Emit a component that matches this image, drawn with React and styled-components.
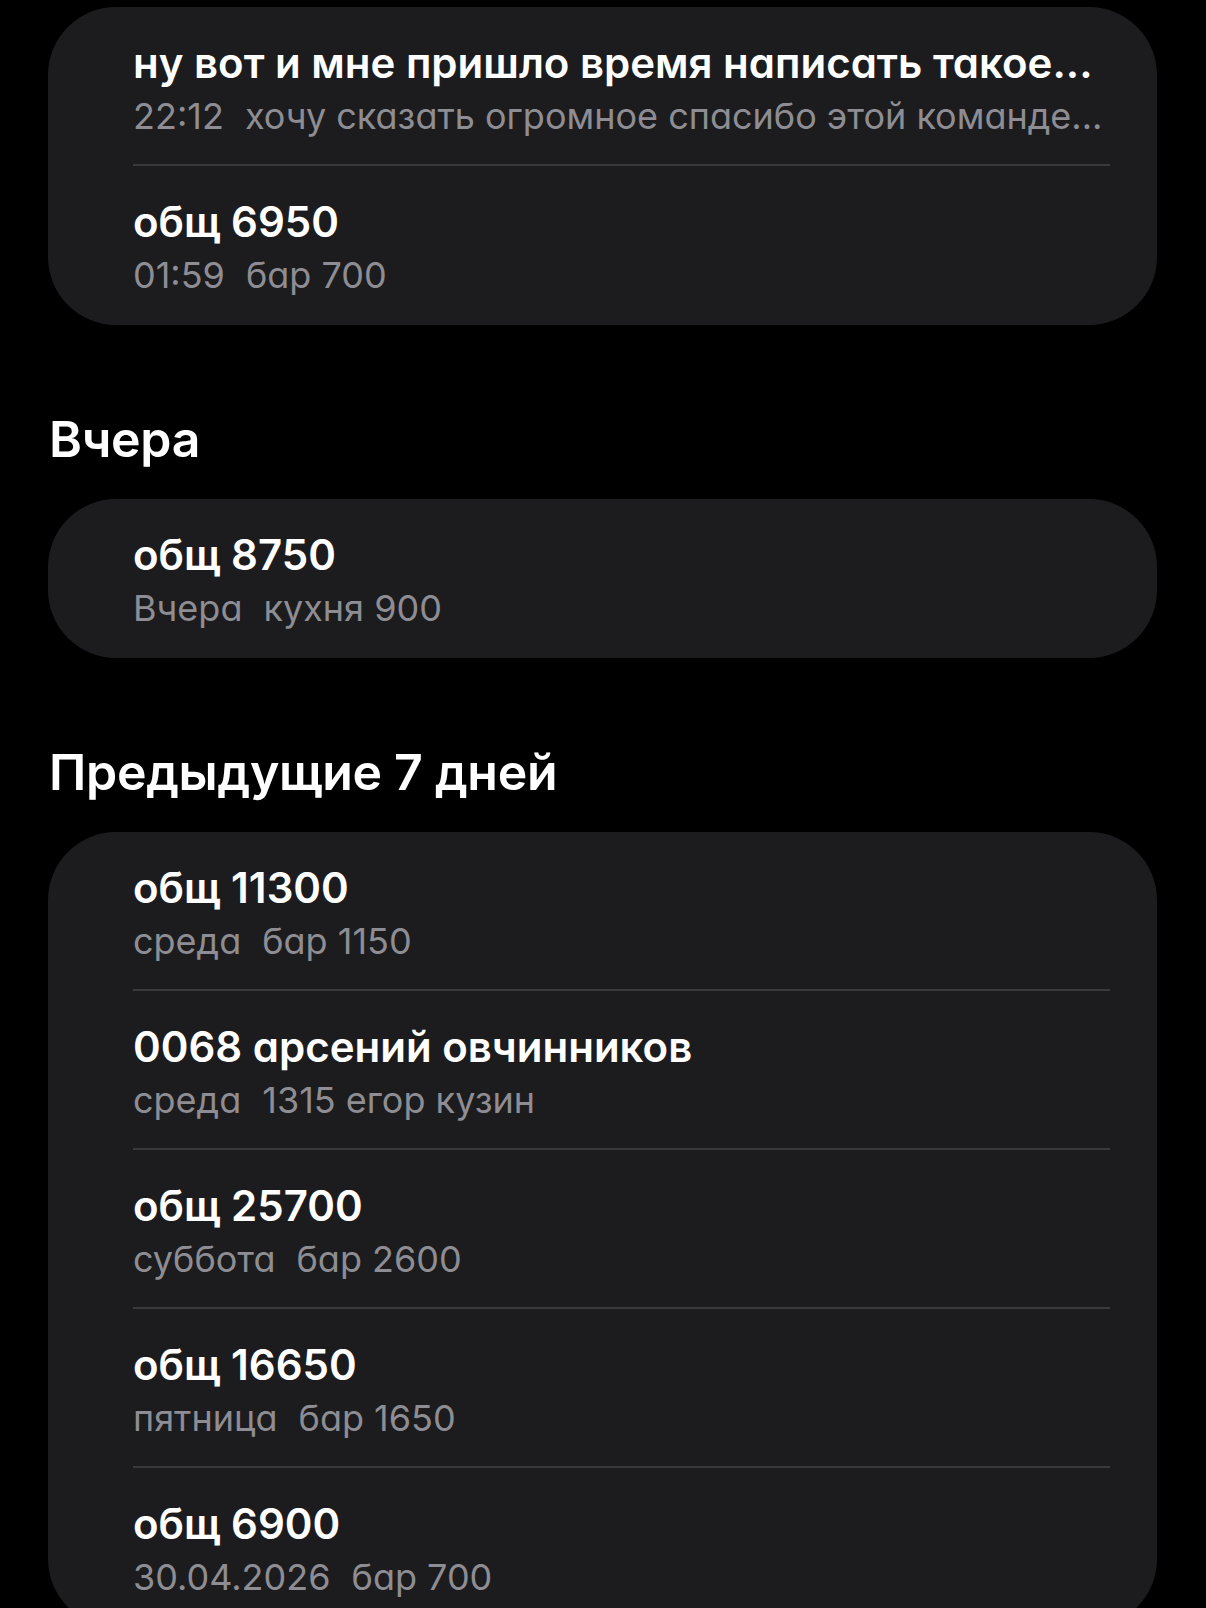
import React from 'react';
import styled, { createGlobalStyle } from 'styled-components';

const GlobalStyle = createGlobalStyle`
  html, body {
    margin: 0;
    padding: 0;
    background: #000;
  }
  body {
    font-family: Inter, "Noto Sans", "Liberation Sans", sans-serif;
    color: #fff;
    -webkit-font-smoothing: antialiased;
  }
`;

const Page = styled.main`
  box-sizing: border-box;
  width: 1206px;
  height: 1608px;
  overflow: hidden;
  padding: 7px 49px 0 48px;
  background: #000;
`;

const SectionTitle = styled.h2`
  margin: 84px 0 30px 1px;
  font-size: 50px;
  line-height: 60px;
  font-weight: 600;
  letter-spacing: -0.3px;
  color: #fff;
`;

const Card = styled.section`
  background: #1c1c1e;
  border-radius: 68px;
  overflow: hidden;
`;

const Row = styled.div`
  padding: 0 47px 0 85px;
`;

const RowBody = styled.div`
  box-sizing: border-box;
  height: 159px;
  padding-top: 31px;
  border-bottom: ${(props) => (props.last ? 'none' : '2.5px solid #3a3a3c')};
`;

const Title = styled.div`
  font-size: 42px;
  line-height: 50px;
  font-weight: 600;
  font-feature-settings: 'cv11';
  white-space: nowrap;
  overflow: hidden;
`;

const Sub = styled.div`
  margin-top: 6px;
  font-size: 36px;
  line-height: 44px;
  font-weight: 400;
  font-feature-settings: 'cv11';
  color: #8d8d93;
  white-space: nowrap;
  overflow: hidden;
`;

const Time = styled.span`
  margin-right: 21px;
`;

const groups = [
  {
    title: null,
    items: [
      {
        title: 'ну вот и мне пришло время написать такое...',
        time: '22:12',
        text: 'хочу сказать огромное спасибо этой команде...',
      },
      { title: 'общ 6950', time: '01:59', text: 'бар 700' },
    ],
  },
  {
    title: 'Вчера',
    items: [{ title: 'общ 8750', time: 'Вчера', text: 'кухня 900' }],
  },
  {
    title: 'Предыдущие 7 дней',
    items: [
      { title: 'общ 11300', time: 'среда', text: 'бар 1150' },
      { title: '0068 арсений овчинников', time: 'среда', text: '1315 егор кузин' },
      { title: 'общ 25700', time: 'суббота', text: 'бар 2600' },
      { title: 'общ 16650', time: 'пятница', text: 'бар 1650' },
      { title: 'общ 6900', time: '30.04.2026', text: 'бар 700' },
    ],
  },
];

export default function App() {
  return (
    <>
      <GlobalStyle />
      <Page>
        {groups.map((group, gi) => (
          <React.Fragment key={gi}>
            {group.title && <SectionTitle>{group.title}</SectionTitle>}
            <Card>
              {group.items.map((item, i) => (
                <Row key={i}>
                  <RowBody last={i === group.items.length - 1}>
                    <Title>{item.title}</Title>
                    <Sub>
                      <Time>{item.time}</Time>
                      {item.text}
                    </Sub>
                  </RowBody>
                </Row>
              ))}
            </Card>
          </React.Fragment>
        ))}
      </Page>
    </>
  );
}
